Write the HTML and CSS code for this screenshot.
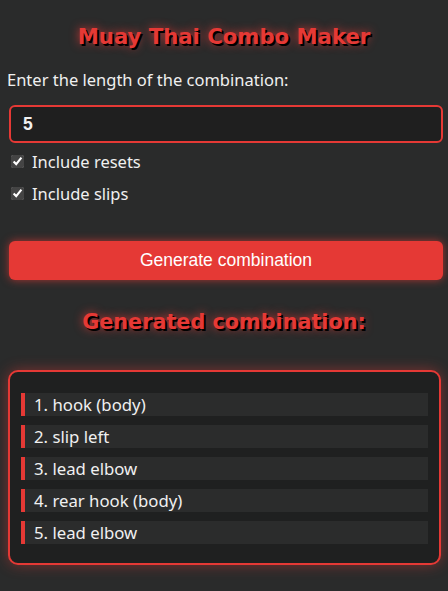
FILE: index.html
```html
<!DOCTYPE html>
<html>
<head>
<meta charset="utf-8">
<link rel="stylesheet" href="styles.css">
</head>
<body>
<div class="page">
  <h1 class="title">Muay Thai Combo Maker</h1>
  <label class="label" for="len">Enter the length of the combination:</label>
  <input id="len" class="num" type="text" value="5">
  <div class="check-row"><input type="checkbox" class="cb" checked><span>Include resets</span></div>
  <div class="check-row"><input type="checkbox" class="cb" checked><span>Include slips</span></div>
  <button class="btn">Generate combination</button>
  <h2 class="title sub">Generated combination:</h2>
  <div class="result">
    <div class="item">1. hook (body)</div>
    <div class="item">2. slip left</div>
    <div class="item">3. lead elbow</div>
    <div class="item">4. rear hook (body)</div>
    <div class="item">5. lead elbow</div>
  </div>
</div>
</body>
</html>
```
FILE: styles.css
```css
html, body {
  margin: 0;
  padding: 0;
}
body {
  background: #2a2b2b;
  color: #f0f0f0;
  font-family: "Noto Sans", sans-serif;
  font-size: 16.5px;
  width: 448px;
  height: 591px;
  overflow: hidden;
}
.page {
  padding: 0 7px 0 7px;
  display: flex;
  flex-direction: column;
}
.title {
  margin: 24px 0 0 0;
  height: 26px;
  line-height: 26px;
  text-align: center;
  font-family: "DejaVu Sans", Verdana, sans-serif;
  font-weight: bold;
  font-size: 21.2px;
  color: #e53935;
  text-shadow: 2px 2px 0 #000, 0 0 10px rgba(229, 57, 53, 0.9);
}
.label {
  margin-top: 19px;
  height: 22px;
  line-height: 22px;
  font-size: 16.5px;
}
.num {
  margin: 14px 0 0 2px;
  width: 434px;
  height: 38px;
  box-sizing: border-box;
  border: 2px solid #e53935;
  border-radius: 6px;
  background: #1f1f1f;
  color: #f0f0f0;
  font-family: "Liberation Sans", Arial, sans-serif;
  font-weight: bold;
  font-size: 17.5px;
  padding: 0 12px;
  outline: none;
}
.check-row {
  display: flex;
  align-items: center;
  height: 24px;
  margin-top: 6px;
  gap: 8px;
}
.check-row + .check-row {
  margin-top: 8px;
}
.cb {
  width: 13px;
  height: 13px;
  margin: 0 0 0 4px;
  accent-color: #444;
}
.btn {
  margin: 36px 0 0 2px;
  width: 434px;
  height: 39px;
  border: none;
  border-radius: 6px;
  background: #e53935;
  color: #fff;
  font-family: "Liberation Sans", Arial, sans-serif;
  font-size: 17.5px;
  box-shadow: 0 0 8px rgba(229, 57, 53, 0.7);
}
.sub {
  margin-top: 29px;
  font-size: 20.75px;
}
.result {
  margin: 35px 0 0 1px;
  width: 433px;
  box-sizing: border-box;
  border: 2px solid #e53935;
  border-radius: 10px;
  background: #1f2020;
  padding: 21px 11px 19px 11px;
  display: flex;
  flex-direction: column;
  gap: 9px;
  box-shadow: 0 0 14px rgba(229, 57, 53, 0.45);
}
.item {
  height: 23px;
  line-height: 23px;
  background: #2b2c2c;
  border-left: 4px solid #e53935;
  padding-left: 9px;
  font-size: 16.75px;
}
```
